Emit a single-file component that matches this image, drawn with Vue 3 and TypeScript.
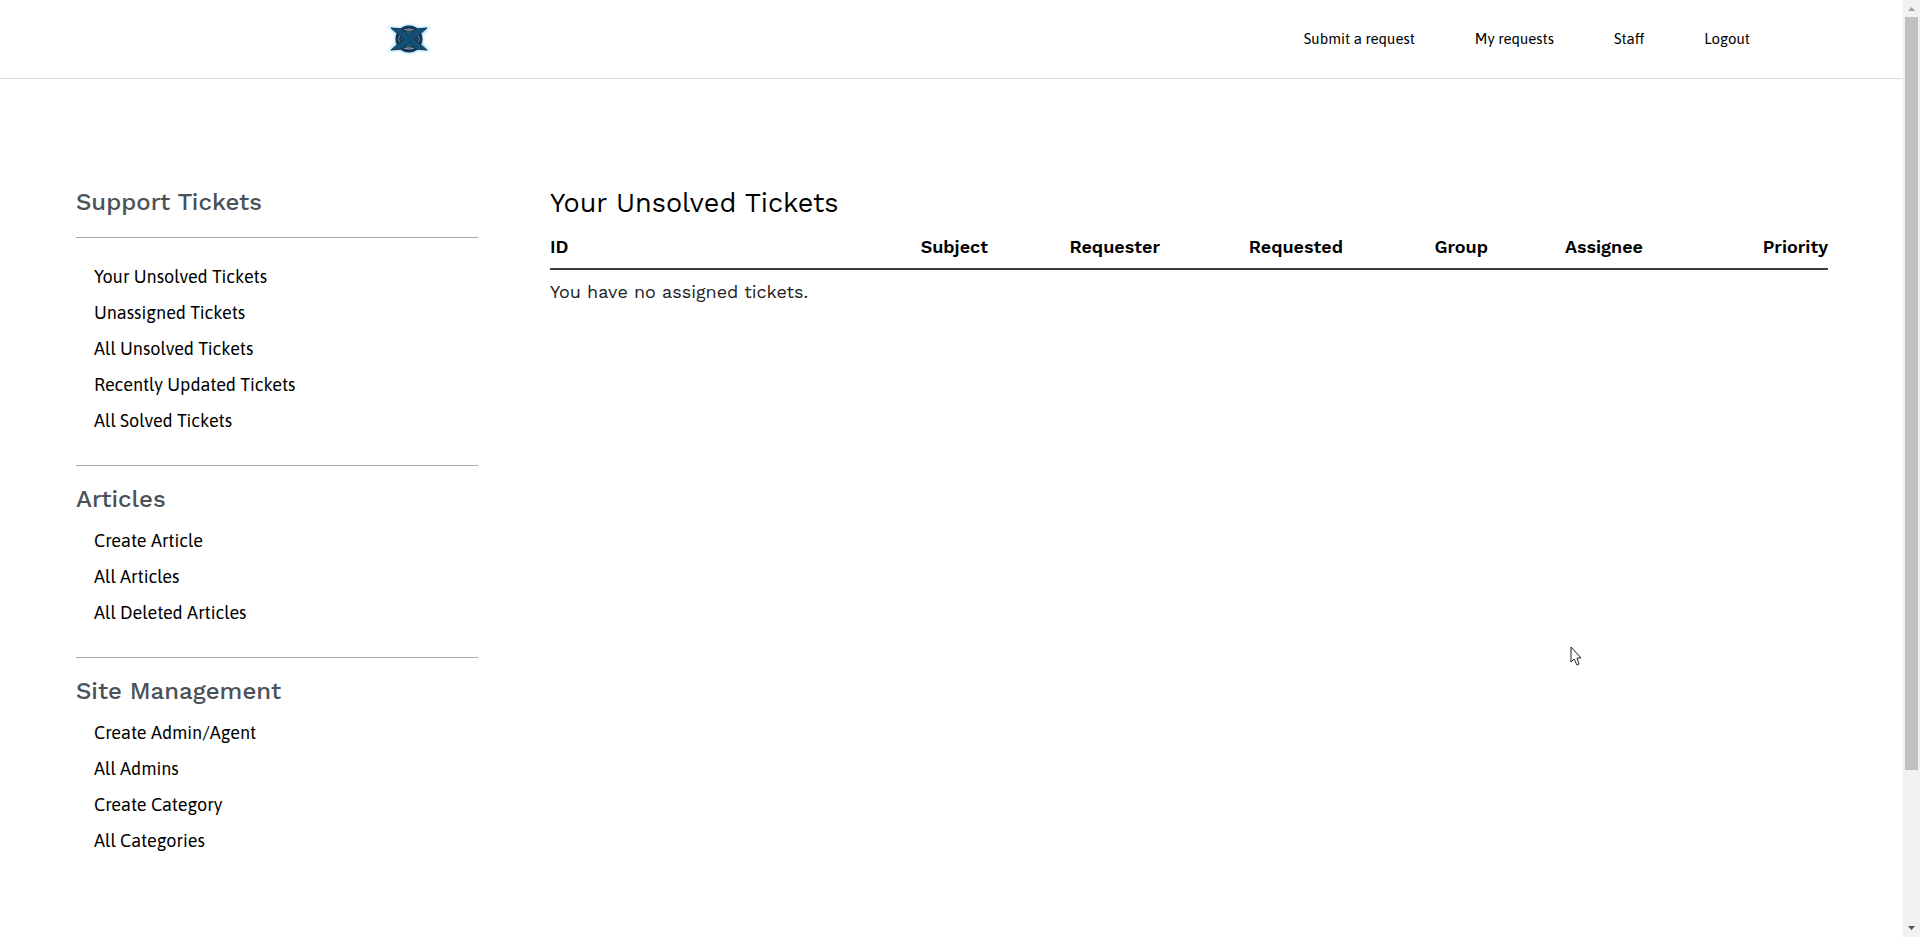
<script setup lang="ts">
interface Section {
  title: string
  ruled: boolean
  links: string[]
}

const navLinks: string[] = ['Submit a request', 'My requests', 'Staff', 'Logout']

const sections: Section[] = [
  {
    title: 'Support Tickets',
    ruled: true,
    links: [
      'Your Unsolved Tickets',
      'Unassigned Tickets',
      'All Unsolved Tickets',
      'Recently Updated Tickets',
      'All Solved Tickets',
    ],
  },
  { title: 'Articles', ruled: false, links: ['Create Article', 'All Articles', 'All Deleted Articles'] },
  {
    title: 'Site Management',
    ruled: false,
    links: ['Create Admin/Agent', 'All Admins', 'Create Category', 'All Categories'],
  },
]

const columns: string[] = ['ID', 'Subject', 'Requester', 'Requested', 'Group', 'Assignee', 'Priority']
</script>

<template>
  <div class="page">
    <header class="topbar">
      <a href="#" class="brand" aria-label="Home">
        <svg width="44" height="34" viewBox="0 0 44 34">
          <defs>
            <filter id="glow" x="-20%" y="-20%" width="140%" height="140%">
              <feGaussianBlur stdDeviation="1.2" />
            </filter>
          </defs>
          <g filter="url(#glow)" fill="#a5e2f7" stroke="#a5e2f7" stroke-width="3">
            <circle cx="22" cy="17" r="13" />
            <path d="M4 6l11 1 7 6 7-6 11-1-10 11 10 11-11-1-7-6-7 6-11 1 10-11z" />
          </g>
          <circle cx="22" cy="17" r="12" fill="#9fc6d6" stroke="#123553" stroke-width="3" />
          <circle cx="22" cy="17" r="9" fill="#195878" stroke="#1c3650" stroke-width="2" />
          <path d="M4 6l11 1 7 7 7-7 11-1-13 11 13 11-11-1-7-7-7 7-11 1 13-11z" fill="#135078" stroke="#1b3450" stroke-width="1" />
          <path d="M19 8h6M19 26h6" stroke="#b3ac9c" stroke-width="1" />
        </svg>
      </a>
      <nav class="topnav">
        <a v-for="link in navLinks" :key="link" href="#">{{ link }}</a>
      </nav>
    </header>

    <div class="content">
      <aside class="sidebar">
        <section v-for="section in sections" :key="section.title" class="group" :class="{ ruled: section.ruled }">
          <h2>{{ section.title }}</h2>
          <ul>
            <li v-for="link in section.links" :key="link">
              <a href="#">{{ link }}</a>
            </li>
          </ul>
        </section>
      </aside>

      <main class="tickets">
        <h1>Your Unsolved Tickets</h1>
        <table>
          <thead>
            <tr>
              <th v-for="column in columns" :key="column" scope="col" :class="`col-${column.toLowerCase()}`">{{ column }}</th>
            </tr>
          </thead>
          <tbody>
            <tr>
              <td :colspan="columns.length">You have no assigned tickets.</td>
            </tr>
          </tbody>
        </table>
      </main>
    </div>

    <div class="scrollbar" aria-hidden="true">
      <svg width="17" height="17" viewBox="0 0 17 17"><path d="M5 11h7L8.500 7z" fill="#a3a3a3" /></svg>
      <div class="track"><div class="thumb"></div></div>
      <svg width="17" height="17" viewBox="0 0 17 17"><path d="M5 6h7L8.500 10z" fill="#505050" /></svg>
    </div>

    <svg class="pointer" width="13" height="20" viewBox="0 0 13 20" aria-hidden="true">
      <path d="M1 1v15l3-3 3 6 2-1-2-6h4z" fill="#fff" stroke="#20202c" stroke-width="1" />
    </svg>
  </div>
</template>

<style>
body {
  margin: 0;
  background: #fff;
}
</style>

<style scoped>
.page {
  min-height: 100vh;
  padding-right: 17px;
  box-sizing: border-box;
  font-family: Asap, Roboto, sans-serif;
  color: #000;
}

a {
  color: inherit;
  text-decoration: none;
}

.topbar {
  display: flex;
  align-items: center;
  justify-content: space-between;
  height: 78px;
  padding: 0 153px 0 20%;
  border-bottom: 1px solid #ddd;
}

.brand {
  display: flex;
  margin-left: 6px;
}

.topnav {
  display: flex;
  gap: 60px;
  padding-bottom: 2px;
  font-size: 15px;
}

.content {
  display: flex;
  gap: 72px;
  padding: 107px 75px 0 76px;
}

.sidebar {
  flex: 0 0 402px;
}

h1,
h2 {
  margin: 0;
  font-family: 'Work Sans', Inter, sans-serif;
}

h2 {
  font-size: 24px;
  line-height: 32px;
  font-weight: 500;
  color: #4b5158;
}

.group + .group {
  margin-top: 26px;
  padding-top: 17px;
  border-top: 1px solid #a6a9a9;
}

ul {
  margin: 0;
  padding: 8px 0 0 18px;
  list-style: none;
  font-size: 18px;
  line-height: 36px;
}

.ruled h2 {
  padding-bottom: 19px;
  border-bottom: 1px solid #a6a9a9;
}

.ruled ul {
  padding-top: 21px;
}

.tickets {
  flex: 1;
  font-family: 'Work Sans', Inter, sans-serif;
}

h1 {
  font-size: 27px;
  line-height: 34px;
  font-weight: 400;
}

table {
  width: 100%;
  table-layout: fixed;
  border-collapse: collapse;
  font-size: 18px;
  line-height: 24px;
}

th {
  padding: 15px 0 9px;
  border-bottom: 2px solid #403e40;
  font-weight: 600;
  text-align: right;
}

.col-id {
  text-align: left;
}

.col-requester {
  width: 172px;
}

.col-requested {
  width: 183px;
}

.col-group {
  width: 145px;
}

.col-assignee {
  width: 155px;
}

.col-priority {
  width: 185px;
}

td {
  padding: 10px 0;
  color: #222;
}

.scrollbar {
  position: fixed;
  inset: 0 0 0 auto;
  width: 17px;
  display: flex;
  flex-direction: column;
  background: #f1f1f1;
}

.track {
  flex: 1;
  padding: 0 2px;
}

.thumb {
  height: 83.4%;
  background: #c1c1c1;
}

.pointer {
  position: fixed;
  left: 1570px;
  top: 646px;
}
</style>
